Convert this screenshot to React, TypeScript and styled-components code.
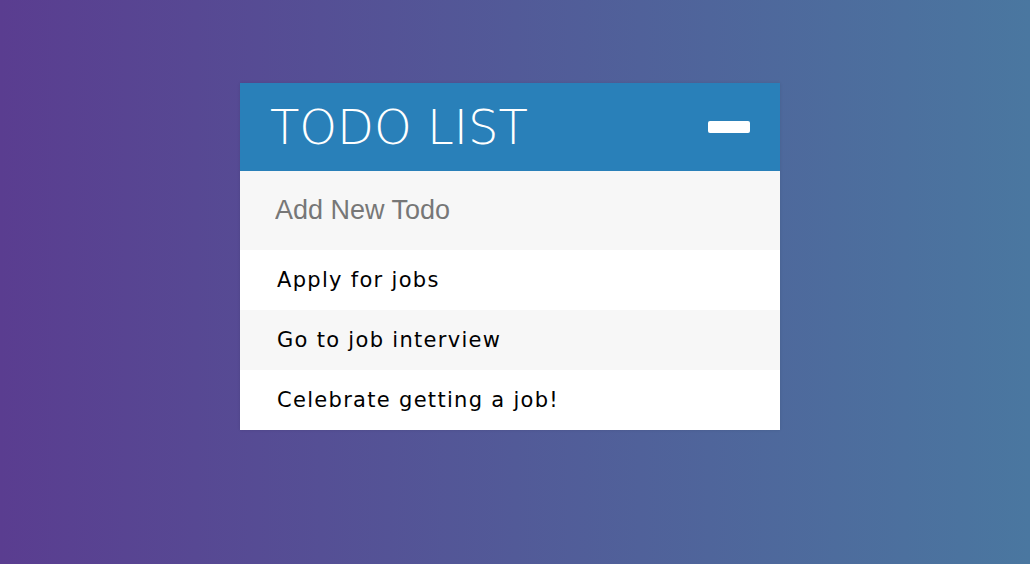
import React, { useState } from 'react'
import styled, { createGlobalStyle } from 'styled-components'

const GlobalStyle = createGlobalStyle`
    html, body {
        margin: 0;
        padding: 0;
        height: 100%;
    }
    body {
        background: linear-gradient(90deg, #5a3d90 0%, #4a77a0 100%);
        font-family: "DejaVu Sans", "Open Sans", sans-serif;
    }
    #root {
        min-height: 100%;
    }
`

const Page = styled.div`
    display: flex;
    justify-content: center;
    padding: 83px 10px 0 0;
    min-height: 564px;
    box-sizing: border-box;
`

const Card = styled.div`
    width: 540px;
    align-self: flex-start;
    box-shadow: 0 0 3px rgba(0, 0, 0, 0.1);
`

const Header = styled.div`
    background-color: #2980b9;
    height: 88px;
    display: flex;
    align-items: center;
    justify-content: space-between;
    padding: 0 30px 0 30px;
    box-sizing: border-box;
`

const Title = styled.h1`
    margin: 0;
    color: #fff;
    font-weight: 200;
    font-size: 48px;
    line-height: 1;
`

const Toggle = styled.button`
    width: 42px;
    height: 12px;
    border: none;
    padding: 0;
    border-radius: 2px;
    background-color: #fff;
    cursor: pointer;
`

const NewTodo = styled.input`
    display: block;
    width: 100%;
    height: 79px;
    box-sizing: border-box;
    border: none;
    outline: none;
    background-color: #f7f7f7;
    padding: 0 0 0 35px;
    font-family: "Liberation Sans", Arial, sans-serif;
    font-size: 27px;
    color: #333;
    &::placeholder {
        color: #777;
    }
`

const List = styled.ul`
    list-style: none;
    margin: 0;
    padding: 0;
`

const Item = styled.li<{ $odd: boolean }>`
    height: 60px;
    display: flex;
    align-items: center;
    padding-left: 37px;
    background-color: ${({ $odd }) => ($odd ? '#f7f7f7' : '#fff')};
    color: #000;
    font-size: 21px;
    letter-spacing: 1.3px;
`

const App = () => {
    const [todos] = useState(['Apply for jobs', 'Go to job interview', 'Celebrate getting a job!'])
    return <>
        <GlobalStyle />
        <Page>
            <Card>
                <Header>
                    <Title>TODO LIST</Title>
                    <Toggle aria-label="toggle input" />
                </Header>
                <NewTodo type="text" placeholder="Add New Todo" />
                <List>
                    {todos.map((t, i) => (
                        <Item key={t} $odd={i % 2 === 1}>{t}</Item>
                    ))}
                </List>
            </Card>
        </Page>
    </>
}

export default App
